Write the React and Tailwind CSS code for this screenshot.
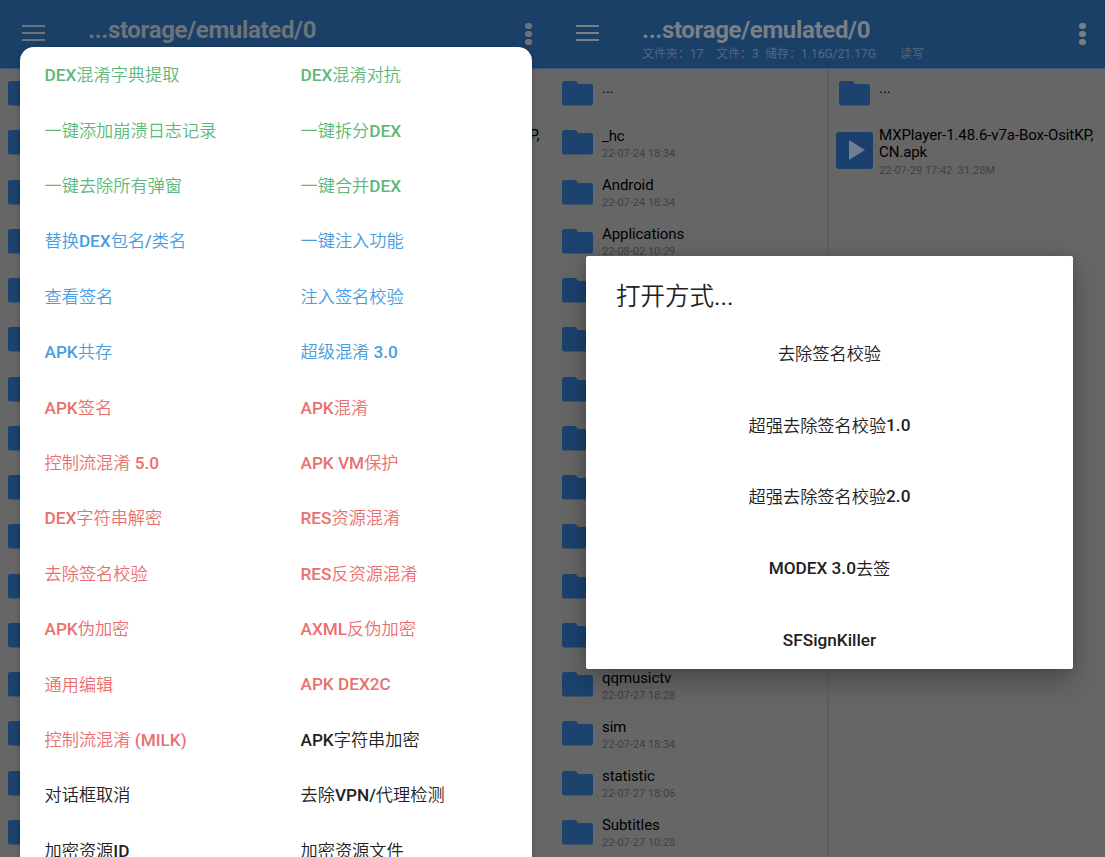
const CJK = 'font-["Noto_Sans_CJK_SC"] font-[350]';

function Mixed({ text, latin = "font-medium" }) {
  const runs = text.match(/[\u2e80-\u9fff\uff00-\uffef]+|[^\u2e80-\u9fff\uff00-\uffef]+/g);
  return runs.map((run, i) => (
    <span key={i} className={/[\u2e80-\u9fff\uff00-\uffef]/.test(run) ? CJK : latin}>
      {run}
    </span>
  ));
}

const GREEN = "text-[#5cb87a]";
const BLUE = "text-[#489dde]";
const RED = "text-[#ea7070]";
const DARK = "text-[#222222]";

const actions = [
  ["DEX混淆字典提取", "DEX混淆对抗", GREEN, GREEN],
  ["一键添加崩溃日志记录", "一键拆分DEX", GREEN, GREEN],
  ["一键去除所有弹窗", "一键合并DEX", GREEN, GREEN],
  ["替换DEX包名/类名", "一键注入功能", BLUE, BLUE],
  ["查看签名", "注入签名校验", BLUE, BLUE],
  ["APK共存", "超级混淆 3.0", BLUE, BLUE],
  ["APK签名", "APK混淆", RED, RED],
  ["控制流混淆 5.0", "APK VM保护", RED, RED],
  ["DEX字符串解密", "RES资源混淆", RED, RED],
  ["去除签名校验", "RES反资源混淆", RED, RED],
  ["APK伪加密", "AXML反伪加密", RED, RED],
  ["通用编辑", "APK DEX2C", RED, RED],
  ["控制流混淆 (MILK)", "APK字符串加密", RED, DARK],
  ["对话框取消", "去除VPN/代理检测", DARK, DARK],
  ["加密资源ID", "加密资源文件", DARK, DARK],
];

const folders = [
  ["...", ""],
  ["_hc", "22-07-24 18:34"],
  ["Android", "22-07-24 18:34"],
  ["Applications", "22-08-02 10:29"],
  null, null, null, null, null, null, null, null,
  ["qqmusictv", "22-07-27 18:28"],
  ["sim", "22-07-24 18:34"],
  ["statistic", "22-07-27 18:06"],
  ["Subtitles", "22-07-27 10:28"],
];

const coveredFolders = folders.map(() => null);

const openWith = ["去除签名校验", "超强去除签名校验1.0", "超强去除签名校验2.0", "MODEX 3.0去签", "SFSignKiller"];

function Folder() {
  return (
    <svg className="block h-[25px] w-[31px] shrink-0 text-[#1b436e]" viewBox="0 0 31 25" fill="currentColor">
      <path d="M2.5 0H12.5Q14 0 14.8 1.2L16 3H28.5Q31 3 31 5.5V22Q31 24.5 28.5 24.5H2.5Q0 24.5 0 22V2.5Q0 0 2.5 0Z" />
    </svg>
  );
}

function Header({ details, tone, menuGap }) {
  return (
    <header className={`flex h-[68.5px] shrink-0 items-start border-b border-[#365a78] bg-[#1a4067] ${tone}`}>
      <div className="mt-[25px] ml-[22px] flex w-[23px] flex-col gap-[5px]">
        <i className="h-[2px] bg-current" />
        <i className="h-[2px] bg-current" />
        <i className="h-[2px] bg-current" />
      </div>
      <div className="ml-[43px] flex-1 pt-[16px]">
        <h1 className="text-[24px] leading-[28px] font-bold tracking-[-0.33px] whitespace-nowrap">...storage/emulated/0</h1>
        {details && (
          <p className="flex text-[12px] leading-[18px] whitespace-pre text-[#566a80]">
            <span className="w-[74px]"><Mixed text="文件夹：17" latin="" /></span>
            <span className="w-[49px]"><Mixed text="文件：3" latin="" /></span>
            <span className="w-[135px]"><Mixed text="储存：1.16G/21.17G" latin="" /></span>
            <span><Mixed text="读写" /></span>
          </p>
        )}
      </div>
      <div className={`mt-[23px] flex w-[7px] flex-col gap-[2px] ${menuGap}`}>
        <i className="h-[6px] rounded-full bg-current" />
        <i className="h-[6px] rounded-full bg-current" />
        <i className="h-[6px] rounded-full bg-current" />
      </div>
    </header>
  );
}

function Entry({ name, date }) {
  return (
    <div className="flex h-[49.27px] shrink-0 items-start pt-[12.5px] pl-[8px]">
      <Folder />
      {name && (
        <div className={date ? "-mt-[3.5px] ml-[9px]" : "-mt-[2.5px] ml-[9px]"}>
          <p className="text-[15px] leading-[18px] tracking-[-0.08px] text-black">{name}</p>
          {date && <p className="text-[11px] leading-[18px] text-[#414141]">{date}</p>}
        </div>
      )}
    </div>
  );
}

function Screen({ details, tone, menuGap, width, items, children }) {
  return (
    <section className={`relative flex h-full flex-col overflow-hidden bg-[#666666] ${width}`}>
      <Header details={details} tone={tone} menuGap={menuGap} />
      <div className="flex min-h-0 flex-1">
        <div className="flex w-[275px] shrink-0 flex-col overflow-hidden border-r-2 border-[#5f5f5f]">
          {items.map((f, i) => (
            <Entry key={i} name={f?.[0]} date={f?.[1]} />
          ))}
        </div>
        <div className="flex min-w-0 flex-1 flex-col pl-[2px]">
          <Entry name={details ? "..." : ""} date="" />
          <div className="flex pt-[9px] pl-[5px]">
            <div className="mt-[5px] flex size-[37px] shrink-0 items-center justify-center rounded-[3px] bg-[#1b3f6d]">
              <svg className="ml-[3px] h-[20px] w-[17px] text-[#6f7f92]" viewBox="0 0 17 20" fill="currentColor">
                <path d="M1 0L17 10L1 20Z" />
              </svg>
            </div>
            <div className="ml-[6px] whitespace-nowrap">
              <p className="text-[15px] leading-[17px] tracking-[-0.09px] text-black">
                MXPlayer-1.48.6-v7a-Box-OsitKP,
                {details && <><br />CN.apk</>}
              </p>
              {details && (
                <p className="pt-px text-[11px] leading-[18px] whitespace-pre text-[#414141]">22-07-29 17:42  31.28M</p>
              )}
            </div>
          </div>
        </div>
      </div>
      {children}
    </section>
  );
}

export default function App() {
  return (
    <main className='flex h-[857px] w-[1105px] overflow-hidden bg-[#666666] font-[Roboto,"Noto_Sans_CJK_SC",sans-serif]'>
      <Screen items={coveredFolders} tone="text-[#6d7379]" menuGap="mr-[22px]" width="w-[554px]">
        <div className="absolute inset-x-0 top-[47px] bottom-0 mr-[22.5px] ml-[20px] overflow-hidden rounded-t-[14px] bg-white shadow-[0_2px_6px_rgba(0,0,0,0.25)]">
          {actions.map(([a, b, ca, cb]) => (
            <div key={a} className="flex h-[55.42px] items-center pl-[24.5px] text-[17.2px] leading-[24px] whitespace-nowrap">
              <span className={`w-[256px] ${ca}`}><Mixed text={a} /></span>
              <span className={cb}><Mixed text={b} /></span>
            </div>
          ))}
        </div>
      </Screen>
      <Screen items={folders} details tone="text-[#7a7f85]" menuGap="mr-[19px]" width="w-[551px]">
        <div className="absolute top-[256px] left-[32px] h-[413px] w-[487px] rounded-[2px] bg-white text-[#212121] shadow-[0_12px_28px_rgba(0,0,0,0.28),0_0_10px_rgba(0,0,0,0.12)]">
          <h2 className="h-[61.5px] pt-[23px] pl-[30px] text-[24.5px] leading-[32px]"><Mixed text="打开方式..." latin="" /></h2>
          <ul>
            {openWith.map((t) => (
              <li key={t} className="flex h-[71.6px] items-center justify-center text-[17.2px] leading-[24px] whitespace-pre">
                <Mixed text={t} />
              </li>
            ))}
          </ul>
        </div>
      </Screen>
    </main>
  );
}
